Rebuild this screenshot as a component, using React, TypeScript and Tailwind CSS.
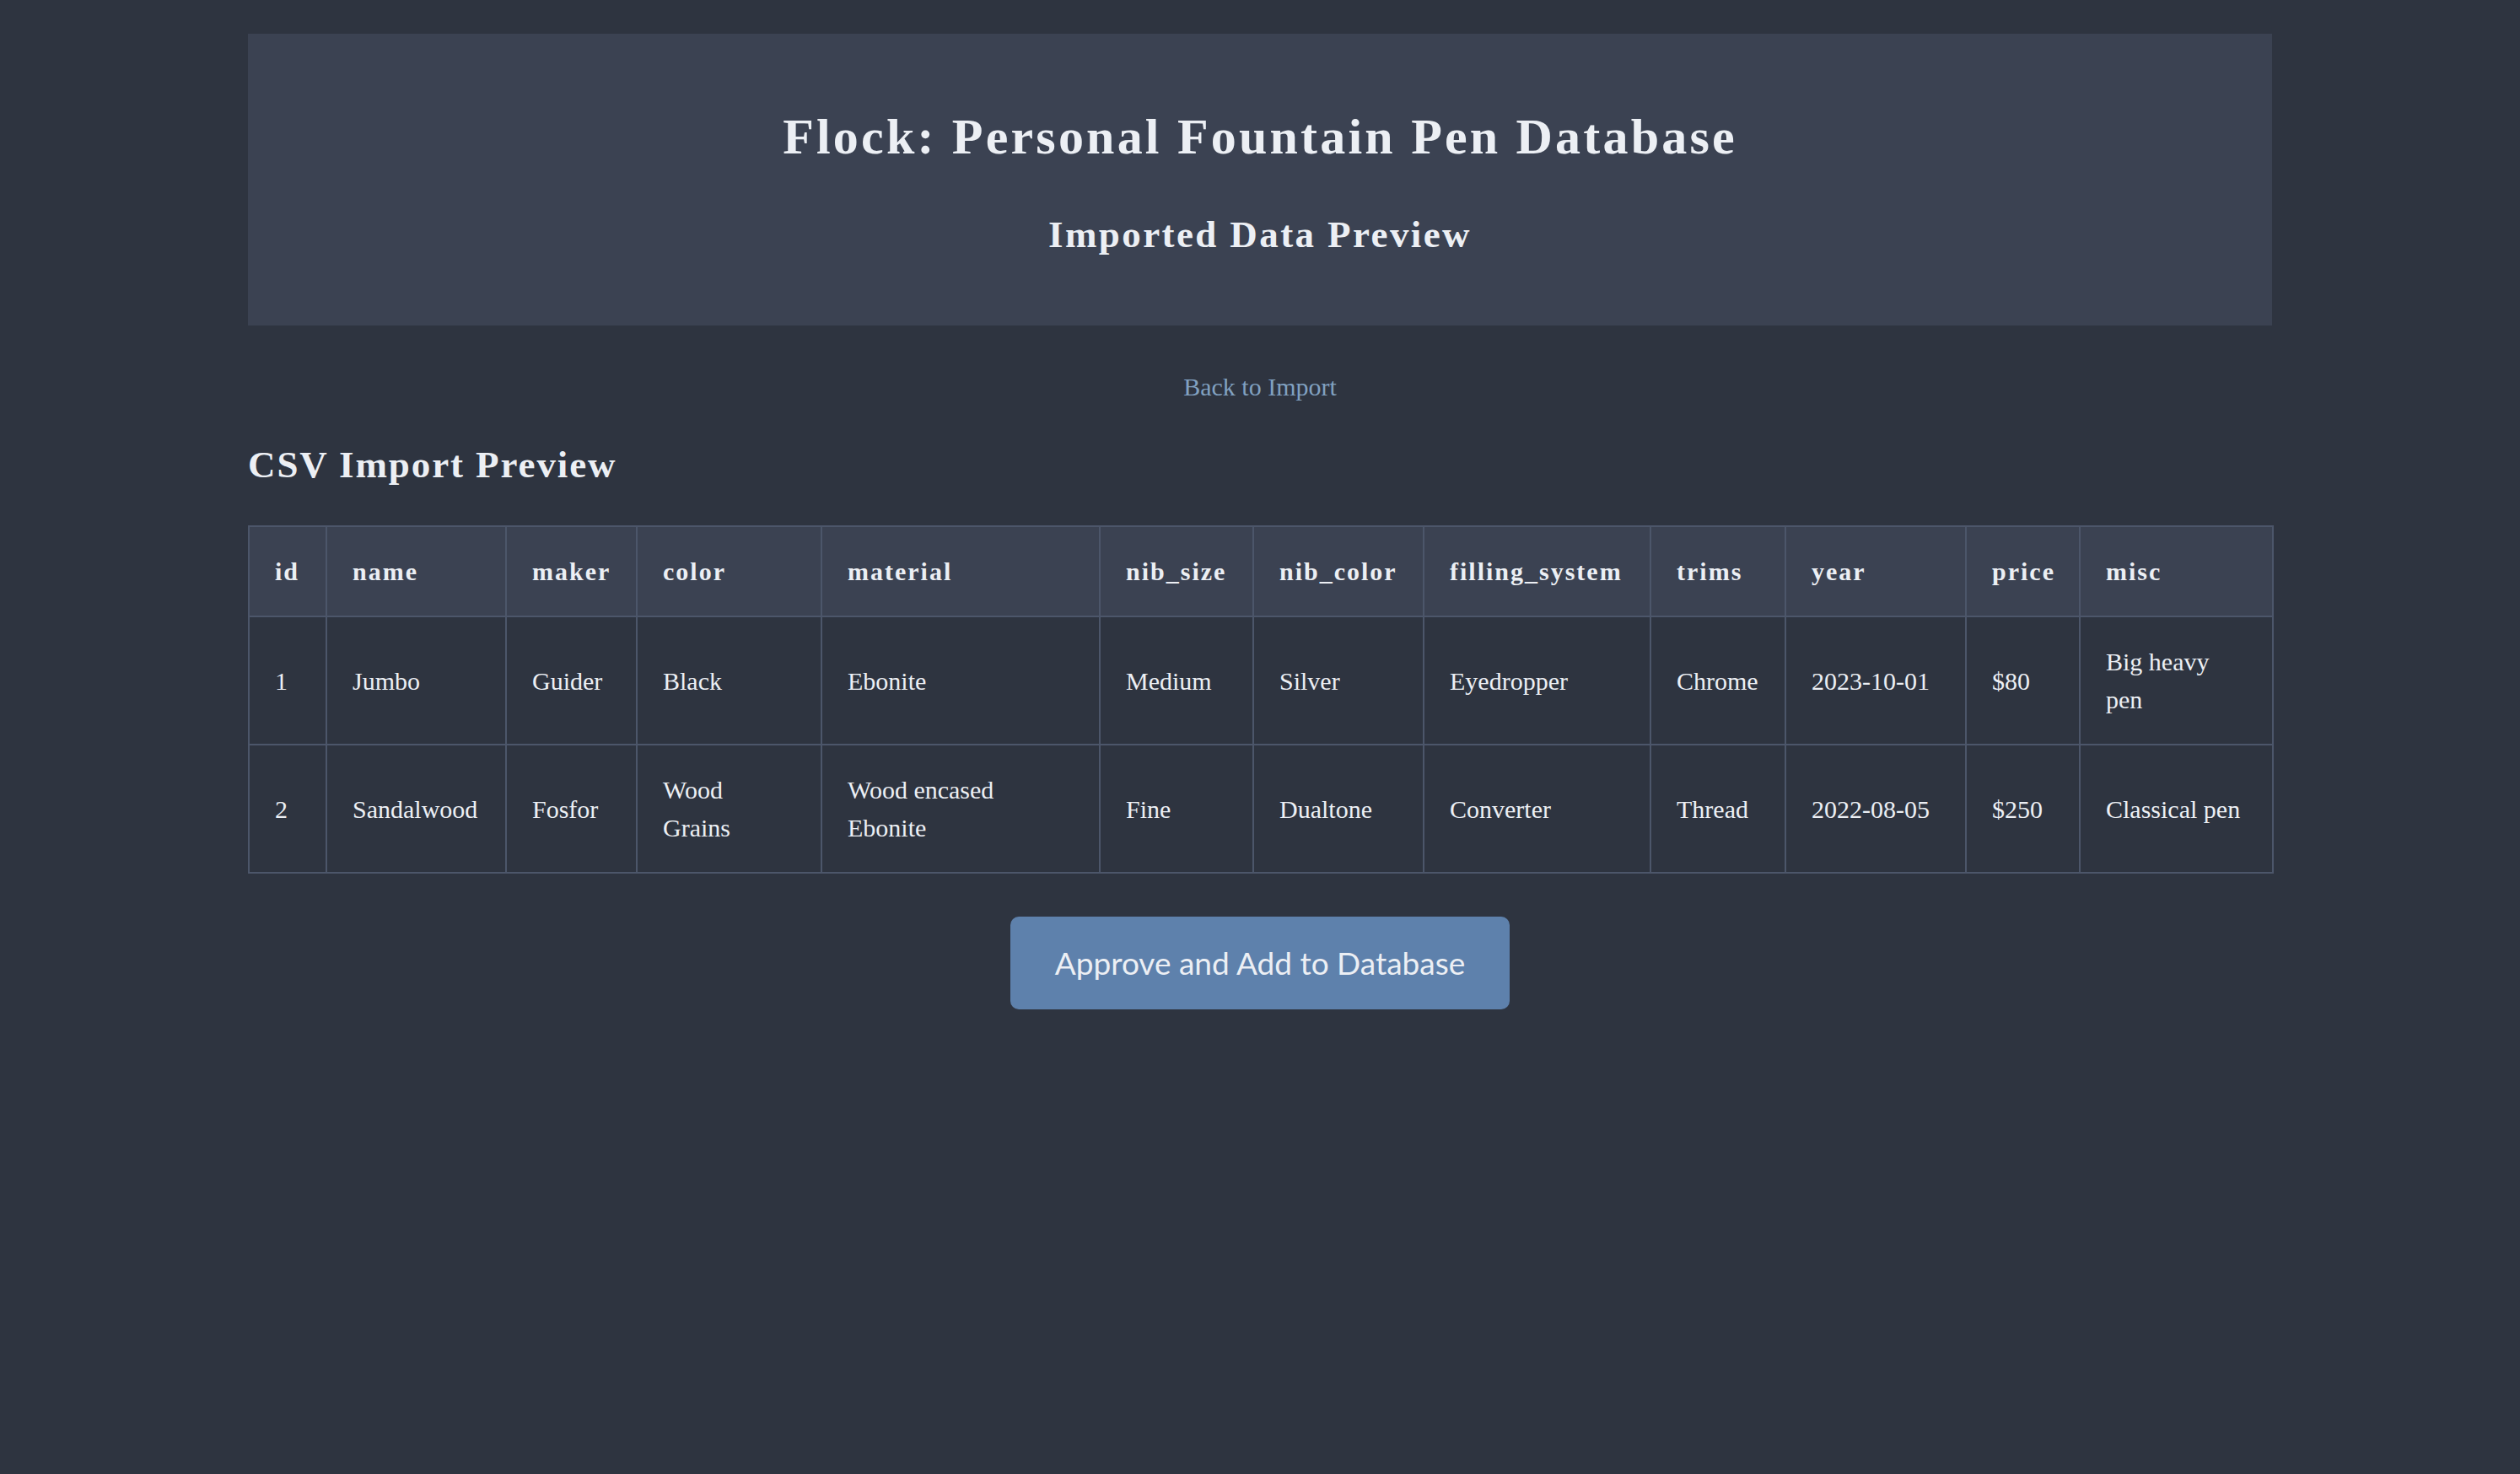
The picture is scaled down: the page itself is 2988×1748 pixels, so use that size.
import React from 'react'

const columns = [
  { key: 'id', w: 'w-[92px]' },
  { key: 'name', w: 'w-[213px]' },
  { key: 'maker', w: 'w-[155px]' },
  { key: 'color', w: 'w-[219px]' },
  { key: 'material', w: 'w-[330px]' },
  { key: 'nib_size', w: 'w-[182px]' },
  { key: 'nib_color', w: 'w-[202px]' },
  { key: 'filling_system', w: 'w-[269px]' },
  { key: 'trims', w: 'w-[160px]' },
  { key: 'year', w: 'w-[214px]' },
  { key: 'price', w: 'w-[135px]' },
  { key: 'misc', w: 'w-[229px]' },
]

const rows: Record<string, string>[] = [
  {
    id: '1',
    name: 'Jumbo',
    maker: 'Guider',
    color: 'Black',
    material: 'Ebonite',
    nib_size: 'Medium',
    nib_color: 'Silver',
    filling_system: 'Eyedropper',
    trims: 'Chrome',
    year: '2023-10-01',
    price: '$80',
    misc: 'Big heavy pen',
  },
  {
    id: '2',
    name: 'Sandalwood',
    maker: 'Fosfor',
    color: 'Wood Grains',
    material: 'Wood encased Ebonite',
    nib_size: 'Fine',
    nib_color: 'Dualtone',
    filling_system: 'Converter',
    trims: 'Thread',
    year: '2022-08-05',
    price: '$250',
    misc: 'Classical pen',
  },
]

const App = () => {
  return (
    <div className="min-h-screen w-full bg-[#2e3440] text-[#eceff4] font-['Liberation_Serif',Georgia,serif] text-[30px] leading-[45px]">
      <div className="mx-auto w-[2400px] pt-[40px] pb-[80px]">
        <header className="bg-[#3b4252] text-center pt-[86px] pb-[81px]">
          <h1 className="text-[60px] leading-[72px] font-bold tracking-[3.2px]">Flock: Personal Fountain Pen Database</h1>
          <h2 className="mt-[53px] text-[45px] leading-[54px] font-bold tracking-[2.4px]">Imported Data Preview</h2>
        </header>

        <div className="mt-[50px] text-center">
          <a href="#" className="text-[#81a1c1]">Back to Import</a>
        </div>

        <h2 className="mt-[43px] text-[45px] leading-[54px] font-bold tracking-[1.9px]">CSV Import Preview</h2>

        <table className="mt-[45px] w-full table-fixed border-collapse border-2 border-[#4c566a]">
          <colgroup>
            {columns.map((c) => (
              <col key={c.key} className={c.w} />
            ))}
          </colgroup>
          <thead>
            <tr className="bg-[#3b4252]">
              {columns.map((c) => (
                <th key={c.key} className="border-2 border-[#4c566a] p-[30px] text-left font-bold tracking-[2px] align-middle">
                  {c.key}
                </th>
              ))}
            </tr>
          </thead>
          <tbody>
            {rows.map((r) => (
              <tr key={r.id}>
                {columns.map((c) => (
                  <td key={c.key} className="border-2 border-[#4c566a] p-[30px] align-middle">
                    {r[c.key]}
                  </td>
                ))}
              </tr>
            ))}
          </tbody>
        </table>

        <div className="mt-[51px] flex justify-center">
          <button className="w-[592px] h-[110px] rounded-[10px] bg-[#5e81ac] text-[#eceff4] font-['Lato',sans-serif] text-[37px] leading-[45px] pb-[2px]">
            Approve and Add to Database
          </button>
        </div>
      </div>
    </div>
  )
}

export default App
